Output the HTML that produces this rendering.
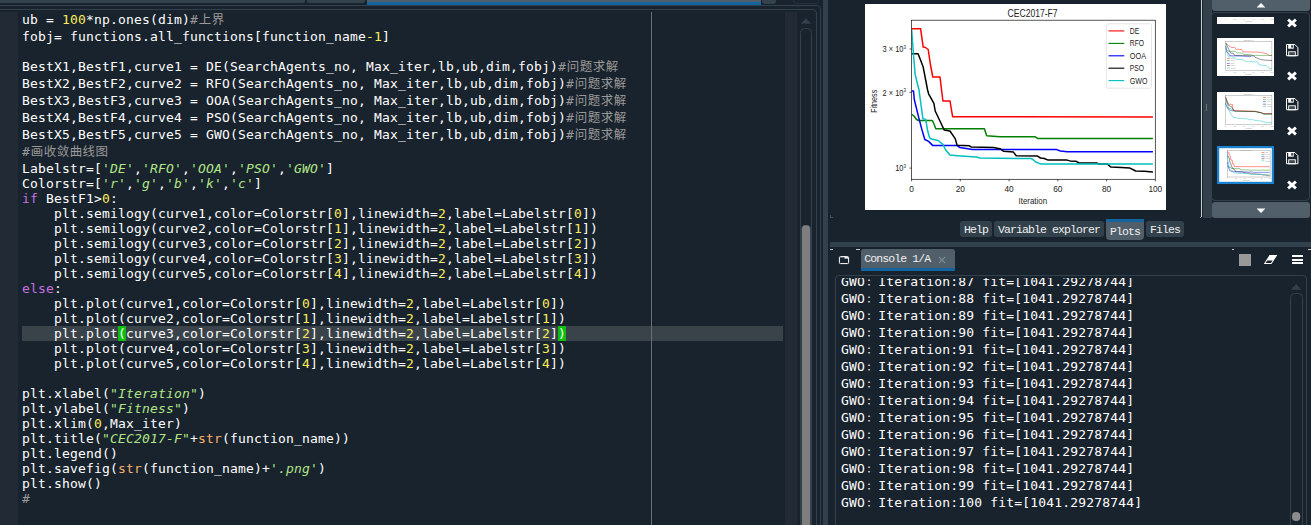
<!DOCTYPE html>
<html><head><meta charset="utf-8"><title>Spyder</title>
<style>
html,body{margin:0;padding:0;background:#19232d;}
body{width:1311px;height:525px;position:relative;overflow:hidden;font-family:"Liberation Sans",sans-serif;}
.a{position:absolute;}
.ln,.cl{position:absolute;left:22px;height:15px;line-height:15px;white-space:pre;color:#ffffff;
 font-family:"DejaVu Sans Mono","Liberation Mono","Noto Sans CJK SC",monospace;font-size:13px;letter-spacing:0.1733px;}
.cl{left:841px;color:#fff;}
.c{color:#999999;} .s{color:#b0e686;font-style:italic;} .n{color:#faed5c;} .k{color:#c670e0;} .b{color:#fab16c;}
.mp{background:#0bbe0b;}
.fc{display:inline-block;width:11.4px;margin-left:1.9px;font-size:8px;font-weight:bold;position:relative;top:-1.2px;}
.z{font-size:12.5px;letter-spacing:0.45px;margin-left:0.8px;}
.tab{position:absolute;background:#32414b;color:#f0f0f0;font-family:"Liberation Mono","Noto Sans CJK SC",monospace;font-size:11.5px;letter-spacing:-0.9px;white-space:pre;border-radius:3px;}
.ic{position:absolute;}
</style></head><body>
<!-- editor top tab strip -->
<div class="a" style="left:0;top:0;width:305px;height:3px;background:#32414b;border-radius:0 0 2px 0"></div>
<div class="a" style="left:307px;top:0;width:58px;height:3px;background:#32414b;border-radius:0 0 2px 2px"></div>
<div class="a" style="left:367px;top:0;width:394px;height:2px;background:#505f69"></div>
<div class="a" style="left:367px;top:2px;width:394px;height:3px;background:#1464a0"></div>
<div class="a" style="left:762px;top:0;width:14px;height:4px;background:#32414b;border-radius:0 0 3px 3px"></div>
<div class="a" style="left:793px;top:-4px;width:26px;height:8px;border:1px solid #24313c;border-radius:0 0 3px 3px;box-sizing:border-box"></div>
<!-- frames -->
<div class="a" style="left:-5px;top:5px;width:826px;height:540px;border:1px solid #32414b;border-radius:4px;box-sizing:border-box"></div>
<div class="a" style="left:-5px;top:9px;width:822px;height:540px;border:1px solid #32414b;border-radius:4px;box-sizing:border-box"></div>
<!-- gutter -->
<div class="a" style="left:0;top:12px;width:18px;height:513px;background:#222b35"></div>
<!-- current line -->
<div class="a" style="left:22px;top:326px;width:761px;height:15px;background:#3a424a"></div>
<!-- edge line -->
<div class="a" style="left:651px;top:12px;width:1px;height:513px;background:#6b6f73"></div>
<!-- scrollflag -->
<div class="a" style="left:785px;top:12px;width:12px;height:513px;background:#232a35"></div>
<!-- editor scrollbar -->
<svg class="a" style="left:800px;top:12px" width="13" height="513" viewBox="0 0 13 513">
<path d="M0.8 11.8 L6 6.5 L11.2 11.8 Z" fill="#32414b"/>
<rect x="0.5" y="16.5" width="11" height="520" rx="4" fill="#19232d" stroke="#32414b"/>
<rect x="1" y="213" width="10" height="320" rx="4" fill="#32414b"/>
<rect x="2" y="213.3" width="8" height="320" rx="3.5" fill="#7e7e7e"/>
</svg>
<!-- code -->
<div class="ln" style="top:12px">ub = <span class="n">100</span>*np.ones(dim)<span class="c">#<span class="z">上界</span></span></div>
<div class="ln" style="top:29px">fobj= functions.all_functions[function_name<span class="n">-1</span>]</div>
<div class="ln" style="top:59px">BestX1,BestF1,curve1 = DE(SearchAgents_no, Max_iter,lb,ub,dim,fobj)<span class="c">#<span class="z">问题求解</span></span></div>
<div class="ln" style="top:76px">BestX2,BestF2,curve2 = RFO(SearchAgents_no, Max_iter,lb,ub,dim,fobj)<span class="c">#<span class="z">问题求解</span></span></div>
<div class="ln" style="top:93px">BestX3,BestF3,curve3 = OOA(SearchAgents_no, Max_iter,lb,ub,dim,fobj)<span class="c">#<span class="z">问题求解</span></span></div>
<div class="ln" style="top:110px">BestX4,BestF4,curve4 = PSO(SearchAgents_no, Max_iter,lb,ub,dim,fobj)<span class="c">#<span class="z">问题求解</span></span></div>
<div class="ln" style="top:127px">BestX5,BestF5,curve5 = GWO(SearchAgents_no, Max_iter,lb,ub,dim,fobj)<span class="c">#<span class="z">问题求解</span></span></div>
<div class="ln" style="top:144px"><span class="c">#<span class="z">画收敛曲线图</span></span></div>
<div class="ln" style="top:161px">Labelstr=[<i class="s">'DE'</i>,<i class="s">'RFO'</i>,<i class="s">'OOA'</i>,<i class="s">'PSO'</i>,<i class="s">'GWO'</i>]</div>
<div class="ln" style="top:176px">Colorstr=[<i class="s">'r'</i>,<i class="s">'g'</i>,<i class="s">'b'</i>,<i class="s">'k'</i>,<i class="s">'c'</i>]</div>
<div class="ln" style="top:191px"><span class="k">if</span> BestF1&gt;<span class="n">0</span>:</div>
<div class="ln" style="top:206px">    plt.semilogy(curve1,color=Colorstr[<span class="n">0</span>],linewidth=<span class="n">2</span>,label=Labelstr[<span class="n">0</span>])</div>
<div class="ln" style="top:221px">    plt.semilogy(curve2,color=Colorstr[<span class="n">1</span>],linewidth=<span class="n">2</span>,label=Labelstr[<span class="n">1</span>])</div>
<div class="ln" style="top:236px">    plt.semilogy(curve3,color=Colorstr[<span class="n">2</span>],linewidth=<span class="n">2</span>,label=Labelstr[<span class="n">2</span>])</div>
<div class="ln" style="top:251px">    plt.semilogy(curve4,color=Colorstr[<span class="n">3</span>],linewidth=<span class="n">2</span>,label=Labelstr[<span class="n">3</span>])</div>
<div class="ln" style="top:266px">    plt.semilogy(curve5,color=Colorstr[<span class="n">4</span>],linewidth=<span class="n">2</span>,label=Labelstr[<span class="n">4</span>])</div>
<div class="ln" style="top:281px"><span class="k">else</span>:</div>
<div class="ln" style="top:296px">    plt.plot(curve1,color=Colorstr[<span class="n">0</span>],linewidth=<span class="n">2</span>,label=Labelstr[<span class="n">0</span>])</div>
<div class="ln" style="top:311px">    plt.plot(curve2,color=Colorstr[<span class="n">1</span>],linewidth=<span class="n">2</span>,label=Labelstr[<span class="n">1</span>])</div>
<div class="ln" style="top:326px">    plt.plot<span class="mp">(</span>curve3,color=Colorstr[<span class="n">2</span>],linewidth=<span class="n">2</span>,label=Labelstr[<span class="n">2</span>]<span class="mp">)</span></div>
<div class="ln" style="top:341px">    plt.plot(curve4,color=Colorstr[<span class="n">3</span>],linewidth=<span class="n">2</span>,label=Labelstr[<span class="n">3</span>])</div>
<div class="ln" style="top:356px">    plt.plot(curve5,color=Colorstr[<span class="n">4</span>],linewidth=<span class="n">2</span>,label=Labelstr[<span class="n">4</span>])</div>
<div class="ln" style="top:386px">plt.xlabel(<i class="s">"Iteration"</i>)</div>
<div class="ln" style="top:401px">plt.ylabel(<i class="s">"Fitness"</i>)</div>
<div class="ln" style="top:416px">plt.xlim(<span class="n">0</span>,Max_iter)</div>
<div class="ln" style="top:431px">plt.title(<i class="s">"CEC2017-F"</i>+<span class="b">str</span>(function_name))</div>
<div class="ln" style="top:446px">plt.legend()</div>
<div class="ln" style="top:461px">plt.savefig(<span class="b">str</span>(function_name)+<i class="s">'.png'</i>)</div>
<div class="ln" style="top:476px">plt.show()</div>
<div class="ln" style="top:491px"><span class="c">#</span></div>

<!-- vertical splitter -->
<div class="a" style="left:823px;top:0;width:5px;height:525px;background:#32414b"></div>
<!-- plot image -->
<svg class="a" style="left:865px;top:4px" width="301" height="206" viewBox="0 0 301 206" font-family="Liberation Sans, sans-serif" fill="#222"><rect width="301" height="206" fill="#fff"/><clipPath id="cp"><rect x="46.5" y="16.2" width="243.8" height="159.1"/></clipPath><g clip-path="url(#cp)"><polyline points="46.6,24.7 55.6,24.7 58.2,43.1 60.5,43.5 63.2,45.5 65.5,61.0 67.8,73.0 75.0,73.0 77.9,97.0 85.0,97.0 87.6,112.7 287.9,113.0" fill="none" stroke="#ff0000" stroke-width="1.5" stroke-linejoin="round"/><polyline points="46.6,110.4 49.0,112.0 51.5,115.5 53.7,116.5 67.4,116.5 69.0,120.0 70.8,124.7 119.4,124.7 121.7,131.7 135.0,132.7 169.8,132.7 173.0,134.6 287.9,134.6" fill="none" stroke="#008000" stroke-width="1.5" stroke-linejoin="round"/><polyline points="46.6,87.0 48.5,87.0 49.3,95.5 54.0,114.6 57.0,126.0 59.8,135.5 63.6,137.4 67.8,141.6 92.0,141.6 95.0,143.5 107.4,145.4 191.7,145.6 195.5,147.0 202.1,147.7 287.9,147.7" fill="none" stroke="#0000ff" stroke-width="1.5" stroke-linejoin="round"/><polyline points="46.6,49.8 53.1,49.8 58.2,63.1 62.6,86.0 63.6,89.8 68.9,99.3 70.2,107.0 79.2,126.0 84.9,127.0 90.2,134.6 92.1,141.2 104.5,141.8 106.4,143.1 128.3,143.5 135.0,144.7 138.8,147.3 148.3,147.9 151.2,151.7 172.6,152.1 175.5,154.0 179.3,154.5 183.1,156.1 202.1,156.1 205.0,156.9 210.7,157.2 214.1,159.0 231.7,159.0 233.6,159.9 242.1,160.0 246.0,163.1 256.4,163.4 265.0,164.1 270.7,167.0 279.3,167.3 287.9,167.9" fill="none" stroke="#000" stroke-width="1.5" stroke-linejoin="round"/><polyline points="46.6,25.0 48.5,51.0 50.2,70.8 54.0,86.0 57.9,114.6 60.7,115.5 62.5,126.0 64.5,133.6 66.4,135.1 73.1,136.5 77.9,140.3 80.7,146.0 84.9,151.1 92.1,151.7 111.2,153.0 115.0,154.0 166.4,154.6 167.9,155.5 170.7,158.0 175.5,159.9 287.9,159.9" fill="none" stroke="#00bfbf" stroke-width="1.5" stroke-linejoin="round"/></g><rect x="46.5" y="16.2" width="243.8" height="159.1" fill="none" stroke="#111" stroke-width="0.7"/><line x1="46.6" y1="175.3" x2="46.6" y2="177.3" stroke="#111" stroke-width="0.7"/><text x="46.6" y="188.0" font-size="8.3" text-anchor="middle">0</text><line x1="95.3" y1="175.3" x2="95.3" y2="177.3" stroke="#111" stroke-width="0.7"/><text x="95.3" y="188.0" font-size="8.3" text-anchor="middle">20</text><line x1="144.1" y1="175.3" x2="144.1" y2="177.3" stroke="#111" stroke-width="0.7"/><text x="144.1" y="188.0" font-size="8.3" text-anchor="middle">40</text><line x1="192.8" y1="175.3" x2="192.8" y2="177.3" stroke="#111" stroke-width="0.7"/><text x="192.8" y="188.0" font-size="8.3" text-anchor="middle">60</text><line x1="241.6" y1="175.3" x2="241.6" y2="177.3" stroke="#111" stroke-width="0.7"/><text x="241.6" y="188.0" font-size="8.3" text-anchor="middle">80</text><line x1="290.3" y1="175.3" x2="290.3" y2="177.3" stroke="#111" stroke-width="0.7"/><text x="290.3" y="188.0" font-size="8.3" text-anchor="middle">100</text><line x1="44.5" y1="45.0" x2="46.5" y2="45.0" stroke="#111" stroke-width="0.7"/><text transform="translate(41.0,48.3) scale(0.9,1)" font-size="8.3" text-anchor="end">3 × 10<tspan font-size="5" dy="-3.5">3</tspan></text><line x1="44.5" y1="88.3" x2="46.5" y2="88.3" stroke="#111" stroke-width="0.7"/><text transform="translate(41.0,91.6) scale(0.9,1)" font-size="8.3" text-anchor="end">2 × 10<tspan font-size="5" dy="-3.5">3</tspan></text><line x1="44.5" y1="164.1" x2="46.5" y2="164.1" stroke="#111" stroke-width="0.7"/><text transform="translate(41.0,167.4) scale(0.9,1)" font-size="8.3" text-anchor="end">10<tspan font-size="5" dy="-3.5">3</tspan></text><text x="167.6" y="12.6" font-size="10" text-anchor="middle" textLength="50" lengthAdjust="spacingAndGlyphs">CEC2017-F7</text><text x="167.8" y="199.8" font-size="8.3" text-anchor="middle" textLength="28.5" lengthAdjust="spacingAndGlyphs">Iteration</text><text transform="translate(12.3,97.3) rotate(-90)" font-size="8.3" text-anchor="middle" textLength="23" lengthAdjust="spacingAndGlyphs">Fitness</text><rect x="241.6" y="19.8" width="44.9" height="64.4" rx="1.5" fill="#fff" stroke="#d4d4d4" stroke-width="0.6"/><line x1="243.5" y1="26.9" x2="259.3" y2="26.9" stroke="#ff0000" stroke-width="1.1"/><text x="264.8" y="29.9" font-size="8.3" textLength="9.5" lengthAdjust="spacingAndGlyphs">DE</text><line x1="243.5" y1="39.4" x2="259.3" y2="39.4" stroke="#008000" stroke-width="1.1"/><text x="264.8" y="42.4" font-size="8.3" textLength="14.3" lengthAdjust="spacingAndGlyphs">RFO</text><line x1="243.5" y1="51.8" x2="259.3" y2="51.8" stroke="#0000ff" stroke-width="1.1"/><text x="264.8" y="54.8" font-size="8.3" textLength="16.2" lengthAdjust="spacingAndGlyphs">OOA</text><line x1="243.5" y1="64.2" x2="259.3" y2="64.2" stroke="#000" stroke-width="1.1"/><text x="264.8" y="67.2" font-size="8.3" textLength="14.3" lengthAdjust="spacingAndGlyphs">PSO</text><line x1="243.5" y1="76.6" x2="259.3" y2="76.6" stroke="#00bfbf" stroke-width="1.1"/><text x="264.8" y="79.6" font-size="8.3" textLength="17.7" lengthAdjust="spacingAndGlyphs">GWO</text></svg>
<!-- plots pane right part -->
<div class="a" style="left:1201px;top:0;width:1px;height:217px;background:#c9cdd0"></div>
<div class="a" style="left:1200px;top:217px;width:1px;height:1px;background:#9aa2a8"></div>
<div class="a" style="left:1203px;top:0;width:8.6px;height:218.3px;background:#32414b"></div><div class="a" style="left:1212px;top:0;width:98px;height:10.6px;background:#505f69;border-radius:0 0 3px 3px"></div><svg class="a" style="left:1255px;top:1px" width="12" height="8" viewBox="0 0 12 8"><path d="M1.6 6.6 L6 2 L10.4 6.6 Z" fill="#fff"/></svg><div class="a" style="left:1211.4px;top:11.6px;width:98.8px;height:189.6px;background:#19232d;border:1px solid #32414b;box-sizing:border-box;border-radius:4px"></div><div class="a" style="left:1212px;top:202.2px;width:98px;height:16px;background:#505f69;border-radius:3px"></div><svg class="a" style="left:1255px;top:207px" width="12" height="8" viewBox="0 0 12 8"><path d="M1.6 1.4 L6 6 L10.4 1.4 Z" fill="#fff"/></svg><svg class="a" style="left:1217px;top:17px" width="57" height="7" viewBox="0 0 57 7" font-family="Liberation Sans, sans-serif"><rect width="57" height="7" fill="#fff"/><text x="8.6" y="2.6" font-size="1.9" text-anchor="middle" fill="#999">0</text><text x="17.9" y="2.6" font-size="1.9" text-anchor="middle" fill="#999">20</text><text x="27.1" y="2.6" font-size="1.9" text-anchor="middle" fill="#999">40</text><text x="36.4" y="2.6" font-size="1.9" text-anchor="middle" fill="#999">60</text><text x="45.6" y="2.6" font-size="1.9" text-anchor="middle" fill="#999">80</text><text x="54.9" y="2.6" font-size="1.9" text-anchor="middle" fill="#999">100</text><text x="31.7" y="5" font-size="2" text-anchor="middle" fill="#999">Iteration</text></svg><svg class="a" style="left:1217px;top:38px" width="57" height="38" viewBox="0 0 57 38" font-family="Liberation Sans, sans-serif"><rect width="57" height="38" fill="#fff"/><rect x="8.6" y="3.5" width="46.3" height="29.2" fill="none" stroke="#777" stroke-width="0.35"/><text x="31.7" y="2.6" font-size="2" text-anchor="middle" fill="#999">CEC2017-F</text><text x="31.7" y="37" font-size="2" text-anchor="middle" fill="#999">Iteration</text><text x="8.6" y="35" font-size="1.9" text-anchor="middle" fill="#999">0</text><text x="17.9" y="35" font-size="1.9" text-anchor="middle" fill="#999">20</text><text x="27.1" y="35" font-size="1.9" text-anchor="middle" fill="#999">40</text><text x="36.4" y="35" font-size="1.9" text-anchor="middle" fill="#999">60</text><text x="45.6" y="35" font-size="1.9" text-anchor="middle" fill="#999">80</text><text x="54.9" y="35" font-size="1.9" text-anchor="middle" fill="#999">100</text><polyline points="8.9,5.5 12.2,7.9 14.1,9.3 17.9,9.5 18.9,11.2 24.6,11.5 26.0,13.9 40.8,14.1 46.5,14.9 50.3,16.0 52.2,17.4 55.0,17.4" fill="none" stroke="#f00" stroke-width="0.9" opacity="0.48" stroke-linejoin="round"/><polyline points="8.9,10.3 10.3,13.1 18.4,13.4 20.0,14.9 25.5,15.1 27.0,16.5 33.6,16.7 35.0,17.4 55.0,17.4" fill="none" stroke="#080" stroke-width="0.9" opacity="0.48" stroke-linejoin="round"/><polyline points="8.9,8.4 9.8,14.1 11.7,15.0 12.2,17.4 17.0,17.9 34.0,18.4" fill="none" stroke="#00f" stroke-width="0.9" opacity="0.48" stroke-linejoin="round"/><polyline points="8.9,5.0 10.3,8.4 12.2,12.2 13.6,15.0 16.5,15.5 17.4,17.4 37.0,17.9 38.0,19.3 40.8,20.3 43.6,21.5 48.4,22.2 55.0,22.5" fill="none" stroke="#000" stroke-width="0.9" opacity="0.48" stroke-linejoin="round"/><polyline points="8.9,6.5 9.3,12.2 10.8,17.0 11.7,18.7 17.0,19.0 18.4,21.2 25.5,21.5 27.4,22.7 29.3,23.6 40.8,23.8 41.7,26.5 44.6,27.2 49.3,27.6 50.8,29.3 52.7,30.6 55.0,30.6" fill="none" stroke="#0bb" stroke-width="0.9" opacity="0.48" stroke-linejoin="round"/><line x1="9.8" y1="20.3" x2="12.8" y2="20.3" stroke="#f00" stroke-width="0.8" opacity="0.55"/><text x="13.8" y="21.0" font-size="1.9" fill="#999">DE</text><line x1="9.8" y1="22.7" x2="12.8" y2="22.7" stroke="#080" stroke-width="0.8" opacity="0.55"/><text x="13.8" y="23.4" font-size="1.9" fill="#999">RFO</text><line x1="9.8" y1="25.5" x2="12.8" y2="25.5" stroke="#00f" stroke-width="0.8" opacity="0.55"/><text x="13.8" y="26.2" font-size="1.9" fill="#999">OOA</text><line x1="9.8" y1="27.6" x2="12.8" y2="27.6" stroke="#000" stroke-width="0.8" opacity="0.55"/><text x="13.8" y="28.3" font-size="1.9" fill="#999">PSO</text><line x1="9.8" y1="30.1" x2="12.8" y2="30.1" stroke="#0bb" stroke-width="0.8" opacity="0.55"/><text x="13.8" y="30.8" font-size="1.9" fill="#999">GWO</text></svg><svg class="a" style="left:1217px;top:92px" width="57" height="38" viewBox="0 0 57 38" font-family="Liberation Sans, sans-serif"><rect width="57" height="38" fill="#fff"/><rect x="8.6" y="3.5" width="46.3" height="29.2" fill="none" stroke="#777" stroke-width="0.35"/><text x="31.7" y="2.6" font-size="2" text-anchor="middle" fill="#999">CEC2017-F</text><text x="31.7" y="37" font-size="2" text-anchor="middle" fill="#999">Iteration</text><text x="8.6" y="35" font-size="1.9" text-anchor="middle" fill="#999">0</text><text x="17.9" y="35" font-size="1.9" text-anchor="middle" fill="#999">20</text><text x="27.1" y="35" font-size="1.9" text-anchor="middle" fill="#999">40</text><text x="36.4" y="35" font-size="1.9" text-anchor="middle" fill="#999">60</text><text x="45.6" y="35" font-size="1.9" text-anchor="middle" fill="#999">80</text><text x="54.9" y="35" font-size="1.9" text-anchor="middle" fill="#999">100</text><polyline points="8.9,5.5 9.8,10.3 11.2,11.7 12.7,12.4 15.5,12.4 16.0,17.9 17.9,18.7 31.2,18.9 38.9,19.3 42.7,20.3 46.5,21.7 55.0,21.7" fill="none" stroke="#f00" stroke-width="0.9" opacity="0.48" stroke-linejoin="round"/><polyline points="8.9,7.4 10.3,12.2 11.7,16.5 14.1,16.8 15.5,17.9 17.9,19.3 38.9,19.6 44.6,20.8 47.0,22.4 55.0,22.4" fill="none" stroke="#080" stroke-width="0.9" opacity="0.48" stroke-linejoin="round"/><polyline points="8.4,11.2 9.8,14.6 11.7,17.4 14.1,18.7 17.4,18.9" fill="none" stroke="#00f" stroke-width="0.9" opacity="0.48" stroke-linejoin="round"/><polyline points="8.4,4.6 10.3,9.3 11.7,13.6 14.6,14.6 16.0,17.4 17.9,19.0 38.9,19.6 40.8,20.3 44.6,20.8 46.5,21.7 55.0,21.7" fill="none" stroke="#000" stroke-width="0.9" opacity="0.48" stroke-linejoin="round"/><polyline points="8.4,9.3 9.3,14.6 10.8,17.0 12.7,19.8 14.6,23.1 16.0,25.3 19.8,25.7 21.2,26.5 29.8,26.8 32.2,27.6 37.0,27.9 38.9,28.6 43.6,28.9 46.5,29.8 50.3,30.5 55.0,30.8" fill="none" stroke="#0bb" stroke-width="0.9" opacity="0.48" stroke-linejoin="round"/><line x1="46.0" y1="5.5" x2="49.0" y2="5.5" stroke="#f00" stroke-width="0.8" opacity="0.55"/><text x="50.0" y="6.2" font-size="1.9" fill="#999">DE</text><line x1="46.0" y1="7.6" x2="49.0" y2="7.6" stroke="#080" stroke-width="0.8" opacity="0.55"/><text x="50.0" y="8.3" font-size="1.9" fill="#999">RFO</text><line x1="46.0" y1="9.6" x2="49.0" y2="9.6" stroke="#00f" stroke-width="0.8" opacity="0.55"/><text x="50.0" y="10.3" font-size="1.9" fill="#999">OOA</text><line x1="46.0" y1="12.2" x2="49.0" y2="12.2" stroke="#000" stroke-width="0.8" opacity="0.55"/><text x="50.0" y="12.9" font-size="1.9" fill="#999">PSO</text><line x1="46.0" y1="14.6" x2="49.0" y2="14.6" stroke="#0bb" stroke-width="0.8" opacity="0.55"/><text x="50.0" y="15.3" font-size="1.9" fill="#999">GWO</text></svg><svg class="a" style="left:1217px;top:146px" width="57" height="38" viewBox="0 0 57 38" font-family="Liberation Sans, sans-serif"><rect width="57" height="38" fill="#fff"/><rect x="10.2" y="4.7" width="42.9" height="26.3" fill="none" stroke="#777" stroke-width="0.35"/><polyline points="10.2,6.1 11.8,6.1 12.2,9.1 12.7,9.2 13.1,9.5 13.5,12.1 13.9,14.0 15.2,14.0 15.7,18.0 17.0,18.0 17.4,20.6 52.7,20.7" fill="none" stroke="#f00" stroke-width="0.9" opacity="0.48" stroke-linejoin="round"/><polyline points="10.2,20.2 10.6,20.5 11.1,21.1 11.5,21.2 13.9,21.2 14.1,21.8 14.5,22.6 23.0,22.6 23.4,23.7 25.8,23.9 31.9,23.9 32.5,24.2 52.7,24.2" fill="none" stroke="#080" stroke-width="0.9" opacity="0.48" stroke-linejoin="round"/><polyline points="10.2,16.4 10.5,16.4 10.7,17.8 11.5,20.9 12.0,22.8 12.5,24.4 13.2,24.7 13.9,25.4 18.2,25.4 18.7,25.7 20.9,26.0 35.8,26.0 36.4,26.3 37.6,26.4 52.7,26.4" fill="none" stroke="#00f" stroke-width="0.9" opacity="0.48" stroke-linejoin="round"/><polyline points="10.2,10.2 11.3,10.2 12.2,12.4 13.0,16.2 13.2,16.8 14.1,18.4 14.4,19.7 15.9,22.8 16.9,23.0 17.9,24.2 18.2,25.3 20.4,25.4 20.7,25.6 24.6,25.7 25.8,25.9 26.4,26.3 28.1,26.4 28.6,27.0 32.4,27.1 32.9,27.4 33.6,27.5 34.2,27.8 37.6,27.8 38.1,27.9 39.1,27.9 39.7,28.2 42.8,28.2 43.1,28.4 44.6,28.4 45.3,28.9 47.1,29.0 48.7,29.1 49.7,29.6 51.2,29.6 52.7,29.7" fill="none" stroke="#000" stroke-width="0.9" opacity="0.48" stroke-linejoin="round"/><polyline points="10.2,6.1 10.5,10.4 10.8,13.7 11.5,16.2 12.2,20.9 12.7,21.1 13.0,22.8 13.4,24.1 13.7,24.3 14.9,24.5 15.7,25.2 16.2,26.1 16.9,26.9 18.2,27.0 21.6,27.3 22.2,27.4 31.3,27.5 31.6,27.7 32.1,28.1 32.9,28.4 52.7,28.4" fill="none" stroke="#0bb" stroke-width="0.9" opacity="0.48" stroke-linejoin="round"/><text x="29" y="5" font-size="2" text-anchor="middle" fill="#999">CEC2017-F7</text><text x="29" y="35" font-size="2" text-anchor="middle" fill="#999">Iteration</text><text x="10.2" y="33.2" font-size="1.9" text-anchor="middle" fill="#999">0</text><text x="18.8" y="33.2" font-size="1.9" text-anchor="middle" fill="#999">20</text><text x="27.4" y="33.2" font-size="1.9" text-anchor="middle" fill="#999">40</text><text x="36.0" y="33.2" font-size="1.9" text-anchor="middle" fill="#999">60</text><text x="44.5" y="33.2" font-size="1.9" text-anchor="middle" fill="#999">80</text><text x="53.1" y="33.2" font-size="1.9" text-anchor="middle" fill="#999">100</text><line x1="44.5" y1="6.5" x2="47.5" y2="6.5" stroke="#f00" stroke-width="0.8" opacity="0.55"/><text x="48.5" y="7.2" font-size="1.9" fill="#999">DE</text><line x1="44.5" y1="8.6" x2="47.5" y2="8.6" stroke="#080" stroke-width="0.8" opacity="0.55"/><text x="48.5" y="9.3" font-size="1.9" fill="#999">RFO</text><line x1="44.5" y1="10.6" x2="47.5" y2="10.6" stroke="#00f" stroke-width="0.8" opacity="0.55"/><text x="48.5" y="11.3" font-size="1.9" fill="#999">OOA</text><line x1="44.5" y1="12.7" x2="47.5" y2="12.7" stroke="#000" stroke-width="0.8" opacity="0.55"/><text x="48.5" y="13.4" font-size="1.9" fill="#999">PSO</text><line x1="44.5" y1="14.8" x2="47.5" y2="14.8" stroke="#0bb" stroke-width="0.8" opacity="0.55"/><text x="48.5" y="15.5" font-size="1.9" fill="#999">GWO</text><rect x="1.1" y="1.1" width="54.8" height="35.8" fill="none" stroke="#1a82d0" stroke-width="2.2"/></svg><svg class="a" style="left:1285.5px;top:16.5px" width="12" height="12" viewBox="-6 -6 12 12"><path d="M-3.9 -3.4 L3.9 3.4 M3.9 -3.4 L-3.9 3.4" stroke="#fff" stroke-width="2.9" fill="none"/></svg><svg class="a" style="left:1285.5px;top:70.2px" width="12" height="12" viewBox="-6 -6 12 12"><path d="M-3.9 -3.4 L3.9 3.4 M3.9 -3.4 L-3.9 3.4" stroke="#fff" stroke-width="2.9" fill="none"/></svg><svg class="a" style="left:1285.5px;top:124.8px" width="12" height="12" viewBox="-6 -6 12 12"><path d="M-3.9 -3.4 L3.9 3.4 M3.9 -3.4 L-3.9 3.4" stroke="#fff" stroke-width="2.9" fill="none"/></svg><svg class="a" style="left:1285.5px;top:178.7px" width="12" height="12" viewBox="-6 -6 12 12"><path d="M-3.9 -3.4 L3.9 3.4 M3.9 -3.4 L-3.9 3.4" stroke="#fff" stroke-width="2.9" fill="none"/></svg><svg class="a" style="left:1286px;top:44px" width="14" height="14" viewBox="0 0 14 14"><path d="M0.5 0.5 H8.8 L11.9 3.6 V11.7 H0.5 Z" fill="none" stroke="#fff" stroke-width="1"/><rect x="2.2" y="0.5" width="5.5" height="4.2" fill="#fff"/><rect x="5.2" y="1.2" width="1.6" height="2.4" fill="#19232d"/><rect x="2.7" y="7.8" width="6.6" height="4" fill="none" stroke="#fff" stroke-width="1"/><line x1="3.5" y1="9.9" x2="8.5" y2="9.9" stroke="#fff" stroke-width="0.6" opacity="0.6"/></svg><svg class="a" style="left:1286px;top:98px" width="14" height="14" viewBox="0 0 14 14"><path d="M0.5 0.5 H8.8 L11.9 3.6 V11.7 H0.5 Z" fill="none" stroke="#fff" stroke-width="1"/><rect x="2.2" y="0.5" width="5.5" height="4.2" fill="#fff"/><rect x="5.2" y="1.2" width="1.6" height="2.4" fill="#19232d"/><rect x="2.7" y="7.8" width="6.6" height="4" fill="none" stroke="#fff" stroke-width="1"/><line x1="3.5" y1="9.9" x2="8.5" y2="9.9" stroke="#fff" stroke-width="0.6" opacity="0.6"/></svg><svg class="a" style="left:1286px;top:152px" width="14" height="14" viewBox="0 0 14 14"><path d="M0.5 0.5 H8.8 L11.9 3.6 V11.7 H0.5 Z" fill="none" stroke="#fff" stroke-width="1"/><rect x="2.2" y="0.5" width="5.5" height="4.2" fill="#fff"/><rect x="5.2" y="1.2" width="1.6" height="2.4" fill="#19232d"/><rect x="2.7" y="7.8" width="6.6" height="4" fill="none" stroke="#fff" stroke-width="1"/><line x1="3.5" y1="9.9" x2="8.5" y2="9.9" stroke="#fff" stroke-width="0.6" opacity="0.6"/></svg>
<div class="a" style="left:1206px;top:104px;width:1px;height:7px;background:#6c6f72"></div>
<!-- pane tabs -->
<div class="tab" style="left:960px;top:221px;width:32px;height:16px;line-height:17px;text-indent:4px">Help</div>
<div class="tab" style="left:994px;top:221px;width:110px;height:16px;line-height:17px;text-indent:4px">Variable explorer</div>
<div class="tab" style="left:1106px;top:219px;width:38px;height:21px;line-height:19px;text-indent:4px;background:#505f69;border-top:3px solid #1464a0;box-sizing:border-box;border-radius:0 0 4px 4px">Plots</div>
<div class="tab" style="left:1146px;top:221px;width:38px;height:16px;line-height:17px;text-indent:4px">Files</div>
<!-- horizontal splitter -->
<div class="a" style="left:830px;top:242px;width:481px;height:5px;background:#32414b"></div>
<!-- console header -->
<div class="tab" style="left:861px;top:249px;width:94px;height:22px;line-height:20px;text-indent:3.3px;background:#505f69;border-bottom:3px solid #1464a0;box-sizing:border-box;border-radius:3px 3px 0 0">Console 1/A</div>
<svg class="a" style="left:937px;top:255px" width="10" height="10" viewBox="0 0 10 10"><path d="M2 2 L8 8 M8 2 L2 8" stroke="#7f8a93" stroke-width="1.1" fill="none"/></svg>
<svg class="a" style="left:838px;top:255px" width="12" height="10" viewBox="0 0 12 10"><rect x="1.4" y="1.6" width="9.2" height="7" rx="1" fill="none" stroke="#fff" stroke-width="1"/><rect x="6.4" y="2.1" width="3.7" height="1.5" fill="#fff"/><rect x="1.9" y="2.1" width="4" height="1" fill="#fff" opacity="0.25"/></svg>
<div class="a" style="left:1239px;top:254px;width:12px;height:12px;background:#999"></div>
<svg class="a" style="left:1263px;top:254px" width="15" height="11" viewBox="0 0 15 11"><path d="M6.5 1 L14.3 1 L8.5 10 L0.8 10 Z" fill="#fff"/><path d="M4.2 6.5 L9.6 6.5 L8.0 9 L2.6 9 Z" fill="#19232d"/></svg>
<div class="a" style="left:1292px;top:255px;width:11px;height:2px;background:#fff"></div>
<div class="a" style="left:1292px;top:259px;width:11px;height:2px;background:#fff"></div>
<div class="a" style="left:1292px;top:262px;width:11px;height:2px;background:#fff"></div>
<div class="a" style="left:830px;top:249px;width:3px;height:1px;background:#c8c8c8"></div>
<div class="a" style="left:856px;top:249px;width:4px;height:1px;background:#c8c8c8"></div>
<div class="a" style="left:1232px;top:249px;width:2px;height:1px;background:#c8c8c8"></div>
<div class="a" style="left:1308px;top:249px;width:3px;height:1px;background:#c8c8c8"></div>
<div class="a" style="left:830px;top:217px;width:3px;height:1px;background:#44525d"></div>
<div class="a" style="left:830px;top:215px;width:1px;height:2px;background:#44525d"></div>
<!-- console frame -->
<div class="a" style="left:835px;top:275px;width:472px;height:270px;border:1px solid #32414b;border-radius:4px;box-sizing:border-box"></div>
<div class="a" style="left:836px;top:278px;width:450px;height:247px;overflow:hidden"><div style="position:absolute;left:-836px;top:-278px">
<div class="cl" style="top:274px">GWO<span class="fc">：</span>Iteration:87 fit=[1041.29278744]</div>
<div class="cl" style="top:291px">GWO<span class="fc">：</span>Iteration:88 fit=[1041.29278744]</div>
<div class="cl" style="top:308px">GWO<span class="fc">：</span>Iteration:89 fit=[1041.29278744]</div>
<div class="cl" style="top:325px">GWO<span class="fc">：</span>Iteration:90 fit=[1041.29278744]</div>
<div class="cl" style="top:342px">GWO<span class="fc">：</span>Iteration:91 fit=[1041.29278744]</div>
<div class="cl" style="top:359px">GWO<span class="fc">：</span>Iteration:92 fit=[1041.29278744]</div>
<div class="cl" style="top:376px">GWO<span class="fc">：</span>Iteration:93 fit=[1041.29278744]</div>
<div class="cl" style="top:393px">GWO<span class="fc">：</span>Iteration:94 fit=[1041.29278744]</div>
<div class="cl" style="top:410px">GWO<span class="fc">：</span>Iteration:95 fit=[1041.29278744]</div>
<div class="cl" style="top:427px">GWO<span class="fc">：</span>Iteration:96 fit=[1041.29278744]</div>
<div class="cl" style="top:444px">GWO<span class="fc">：</span>Iteration:97 fit=[1041.29278744]</div>
<div class="cl" style="top:461px">GWO<span class="fc">：</span>Iteration:98 fit=[1041.29278744]</div>
<div class="cl" style="top:478px">GWO<span class="fc">：</span>Iteration:99 fit=[1041.29278744]</div>
<div class="cl" style="top:495px">GWO<span class="fc">：</span>Iteration:100 fit=[1041.29278744]</div>

</div></div>
<svg class="a" style="left:1289px;top:280px" width="15" height="245" viewBox="0 0 15 245">
<path d="M1.7 9.8 L7.2 4.3 L12.4 9.8 Z" fill="#32414b"/>
<rect x="1.5" y="13.5" width="12" height="260" rx="4" fill="#19232d" stroke="#32414b"/>
<rect x="3" y="232" width="8.3" height="9" rx="4" fill="#8c8c8c"/>
</svg>
</body></html>
